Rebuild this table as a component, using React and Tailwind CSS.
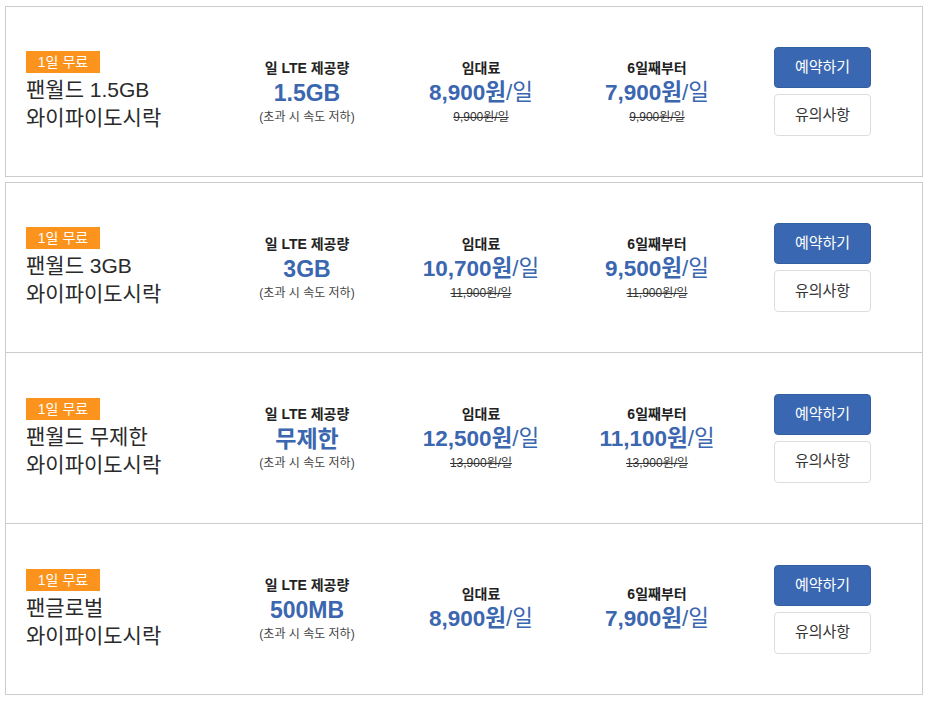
import React from "react";

const plans = [
  { name: "팬월드 1.5GB", data: "1.5GB", price: "8,900", from6: "7,900", orig: "9,900원/일", h: "h-[171px]", mt: "" },
  { name: "팬월드 3GB", data: "3GB", price: "10,700", from6: "9,500", orig: "11,900원/일", h: "h-[171px]", mt: "mt-[5px]" },
  { name: "팬월드 무제한", data: "무제한", price: "12,500", from6: "11,100", orig: "13,900원/일", h: "h-[172px]", mt: "-mt-px" },
  { name: "팬글로벌", data: "500MB", price: "8,900", from6: "7,900", orig: null, h: "h-[172px]", mt: "-mt-px" },
];

function Price({ label, value, orig }) {
  return (
    <div className="flex flex-col items-center">
      <div className="text-[14px] leading-[18px] font-bold text-[#222]">{label}</div>
      <div className="text-[22.5px] leading-[28px] font-bold text-[#3b66b0] mt-[2px]">
        {value}원<span className="font-normal">/일</span>
      </div>
      {orig && (
        <div className="text-[12px] leading-[16px] text-[#333] line-through mt-[2px]">{orig}</div>
      )}
    </div>
  );
}

export default function App() {
  return (
    <div
      className="bg-white w-[930px] h-[702px] pt-[6px] pl-[5px]"
      style={{ fontFamily: '"Liberation Sans", "Noto Sans CJK KR", sans-serif' }}
    >
      {plans.map((p, i) => (
        <div
          key={i}
          className={`w-[918px] ${p.h} ${p.mt} border border-[#cccccc] bg-white flex items-center pl-[20px]`}
        >
          <div className="w-[190px] flex flex-col items-start">
            <div className="w-[74px] h-[22px] bg-[#fb931c] text-white text-[14px] leading-[22px] text-center">
              1일 무료
            </div>
            <div className="text-[21px] leading-[28px] text-[#2a2a2a] mt-[3px]">{p.name}</div>
            <div className="text-[21px] leading-[28px] text-[#2a2a2a]">와이파이도시락</div>
          </div>
          <div className="w-[182px] flex flex-col items-center">
            <div className="text-[14px] leading-[18px] font-bold text-[#222]">일 LTE 제공량</div>
            <div className="text-[23px] leading-[28px] font-bold text-[#3b66b0] mt-[2px]">{p.data}</div>
            <div className="text-[12px] leading-[16px] text-[#444] mt-[2px]">(초과 시 속도 저하)</div>
          </div>
          <div className="w-[166px]">
            <Price label="임대료" value={p.price} orig={p.orig} />
          </div>
          <div className="w-[186px]">
            <Price label="6일째부터" value={p.from6} orig={p.orig} />
          </div>
          <div className="ml-[24px] w-[97px] flex flex-col gap-[6px]">
            <button className="h-[41px] w-full rounded-[4px] bg-[#3a67b1] border border-[#35609f] text-white text-[15px]">
              예약하기
            </button>
            <button className="h-[42px] w-full rounded-[4px] bg-white border border-[#dddddd] text-[#333] text-[15px]">
              유의사항
            </button>
          </div>
        </div>
      ))}
    </div>
  );
}
